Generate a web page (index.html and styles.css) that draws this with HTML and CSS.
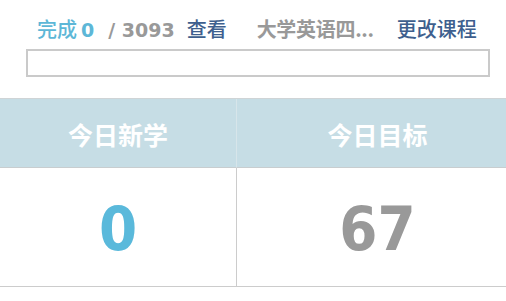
FILE: index.html
```html
<!DOCTYPE html>
<html lang="zh">
<head>
<meta charset="utf-8">
<link rel="stylesheet" href="styles.css">
</head>
<body>
<div class="topbar">
  <span class="done">完成</span><span class="done-num">0</span>
  <span class="total">/ 3093</span>
  <a class="link view">查看</a>
  <span class="course">大学英语四...</span>
  <a class="link change">更改课程</a>
</div>
<div class="search-wrap"><div class="search"></div></div>
<div class="stats">
  <div class="cell head">今日新学</div>
  <div class="cell head">今日目标</div>
  <div class="cell num blue">0</div>
  <div class="cell num gray">67</div>
</div>
</body>
</html>
```
FILE: styles.css
```css
html, body { margin: 0; padding: 0; background: #fff; overflow: hidden; }
body { width: 506px; font-family: "DejaVu Sans", "Noto Sans CJK SC", sans-serif; }
.topbar {
  display: flex;
  align-items: baseline;
  padding: 16px 0 0 37px;
  height: 30px;
  font-size: 19px;
  line-height: 26px;
  white-space: nowrap;
}
.done { color: #5db7d7; font-family: "Noto Sans CJK SC", sans-serif; font-size: 20px; font-weight: 500; }
.done-num { color: #5db7d7; font-weight: bold; margin-left: 4px; }
.total { color: #999; font-weight: bold; margin-left: 14px; }
.link { color: #3e5f8e; font-family: "Noto Sans CJK SC", sans-serif; font-size: 20px; font-weight: 500; }
.view { margin-left: 12px; }
.course { color: #999; font-family: "Noto Sans CJK SC", sans-serif; font-size: 20px; font-weight: bold; margin-left: 30px; letter-spacing: -0.3px; }
.change { margin-left: 23px; }
.search-wrap { padding: 3px 0 0 26px; }
.search { width: 460px; height: 24px; border: 2px solid #cacaca; }
.stats {
  margin-top: 21px;
  display: grid;
  grid-template-columns: 237px 281px;
  grid-template-rows: 69px 118px;
  border-top: 1px solid #cfd4d6;
  border-bottom: 1px solid #cccccc;
  width: 518px;
}
.cell { display: flex; align-items: center; justify-content: center; }
.head {
  background: #c6dde5;
  color: #fff;
  font-family: "Noto Sans CJK SC", sans-serif;
  font-weight: bold;
  font-size: 25px;
  border-bottom: 1px solid #c8cdcf;
  padding-top: 2px;
  box-sizing: border-box;
}
.head:first-child { border-right: 1px solid #d7e5ea; }
.num {
  font-family: "DejaVu Sans Condensed", "DejaVu Sans", sans-serif;
  font-stretch: condensed;
  font-weight: bold;
  font-size: 61px;
  padding-top: 2px;
  box-sizing: border-box;
}
.num.blue { color: #5ab9db; border-right: 1px solid #cccccc; }
.num.gray { color: #999999; }
```
